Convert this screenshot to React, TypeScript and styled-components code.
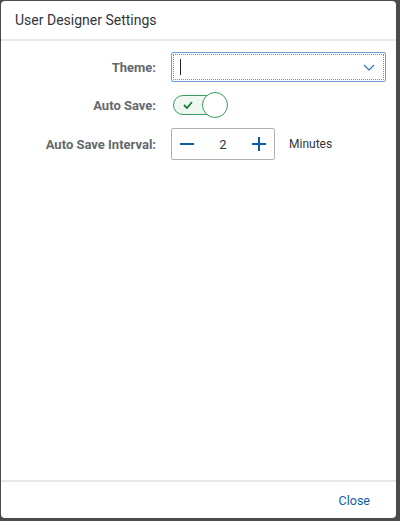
import React, { useState } from 'react';
import { styled, createGlobalStyle } from 'styled-components';

const GlobalStyle = createGlobalStyle`
  html, body {
    margin: 0;
    padding: 0;
    background: #4b4b4b;
    font-family: Roboto, 'Liberation Sans', Arial, sans-serif;
  }
`;

const Page = styled.div`
  width: 400px;
  height: 521px;
  padding: 1px 4px 3px 1px;
  box-sizing: border-box;
`;

const Dialog = styled.div`
  width: 100%;
  height: 100%;
  background: #ffffff;
  border-radius: 4px;
  display: flex;
  flex-direction: column;
  overflow: hidden;
`;

const Header = styled.div`
  height: 38px;
  display: flex;
  align-items: center;
  padding: 0 14px;
  border-bottom: 2px solid #e8e8e8;
  font-size: 14px;
  color: #32363a;
`;

const Content = styled.div`
  flex: 1;
  padding: 11px 0 0 0;
`;

const Form = styled.div`
  display: grid;
  grid-template-columns: 155px auto;
  column-gap: 15px;
  row-gap: 8px;
  align-items: center;
`;

const Label = styled.label`
  text-align: right;
  font-size: 13px;
  font-weight: 700;
  color: #64686c;
`;

const Select = styled.div`
  width: 215px;
  height: 30px;
  box-sizing: border-box;
  border: 1px solid #6a9fd6;
  border-radius: 2px;
  outline: 1px dotted #8a8a8a;
  outline-offset: -3px;
  display: flex;
  align-items: center;
  justify-content: space-between;
  padding: 0 10px 0 8px;
`;

const Caret = styled.span`
  width: 1px;
  height: 16px;
  background: #222;
`;

const Switch = styled.div`
  position: relative;
  width: 56px;
  height: 30px;
  display: flex;
  align-items: center;
  margin-left: 2px;
`;

const Track = styled.div`
  width: 44px;
  height: 20px;
  box-sizing: border-box;
  border: 1px solid #3c9a5f;
  border-radius: 10px;
  background: #eef7f0;
  display: flex;
  align-items: center;
  padding-left: 9px;
`;

const Knob = styled.div`
  position: absolute;
  left: 29px;
  top: 2px;
  width: 26px;
  height: 26px;
  box-sizing: border-box;
  border-radius: 50%;
  border: 1px solid #3c9a5f;
  background: #ffffff;
`;

const IntervalRow = styled.div`
  display: flex;
  align-items: center;
  gap: 14px;
`;

const Stepper = styled.div`
  width: 104px;
  height: 32px;
  box-sizing: border-box;
  border: 1px solid #b0b3b6;
  border-radius: 2px;
  display: flex;
  align-items: center;
  justify-content: space-between;
  padding: 0 7px;
`;

const StepButton = styled.button`
  width: 16px;
  height: 16px;
  padding: 0;
  border: none;
  background: transparent;
  display: flex;
  align-items: center;
  justify-content: center;
  cursor: pointer;
`;

const Value = styled.span`
  font-size: 13px;
  color: #32363a;
`;

const Unit = styled.span`
  font-size: 12px;
  color: #32363a;
`;

const Footer = styled.div`
  height: 36px;
  border-top: 2px solid #e8e8e8;
  display: flex;
  align-items: center;
  justify-content: flex-end;
  padding: 0 26px 0 0;
`;

const CloseButton = styled.button`
  border: none;
  background: transparent;
  color: #0a5ea8;
  font-family: inherit;
  font-size: 12.5px;
  padding: 0;
  cursor: pointer;
`;

export default function App() {
  const [interval, setInterval] = useState(2);

  return (
    <Page>
      <GlobalStyle />
      <Dialog>
        <Header>User Designer Settings</Header>
        <Content>
          <Form>
            <Label>Theme:</Label>
            <Select>
              <Caret />
              <svg width="12" height="7" viewBox="0 0 12 7">
                <path d="M1 1 L6 6 L11 1" fill="none" stroke="#2f6fb5" strokeWidth="1.1" />
              </svg>
            </Select>

            <Label>Auto Save:</Label>
            <Switch>
              <Track>
                <svg width="10" height="8" viewBox="0 0 10 8">
                  <path d="M1 4 L4 7 L9 1" fill="none" stroke="#1e7a3c" strokeWidth="1.8" />
                </svg>
              </Track>
              <Knob />
            </Switch>

            <Label>Auto Save Interval:</Label>
            <IntervalRow>
              <Stepper>
                <StepButton onClick={() => setInterval(interval - 1)}>
                  <svg width="14" height="14" viewBox="0 0 14 14">
                    <path d="M0 7 H14" stroke="#0a5ea8" strokeWidth="2" />
                  </svg>
                </StepButton>
                <Value>{interval}</Value>
                <StepButton onClick={() => setInterval(interval + 1)}>
                  <svg width="14" height="14" viewBox="0 0 14 14">
                    <path d="M0 7 H14 M7 0 V14" stroke="#0a5ea8" strokeWidth="2" />
                  </svg>
                </StepButton>
              </Stepper>
              <Unit>Minutes</Unit>
            </IntervalRow>
          </Form>
        </Content>
        <Footer>
          <CloseButton>Close</CloseButton>
        </Footer>
      </Dialog>
    </Page>
  );
}
